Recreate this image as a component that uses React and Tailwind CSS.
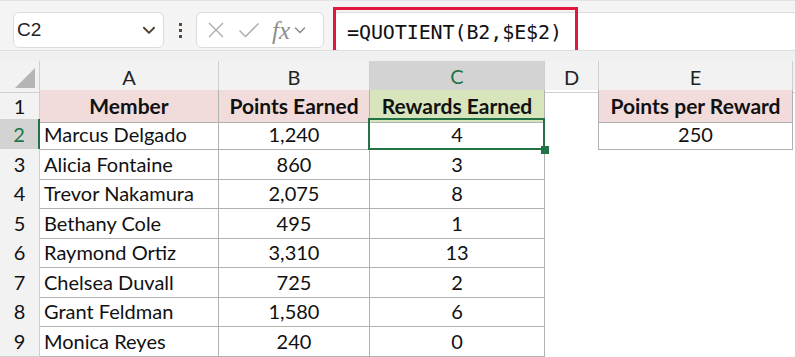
import React from 'react';

const members = [
    ['Marcus Delgado', '1,240', '4'],
    ['Alicia Fontaine', '860', '3'],
    ['Trevor Nakamura', '2,075', '8'],
    ['Bethany Cole', '495', '1'],
    ['Raymond Ortiz', '3,310', '13'],
    ['Chelsea Duvall', '725', '2'],
    ['Grant Feldman', '1,580', '6'],
    ['Monica Reyes', '240', '0'],
];

const cols = 'grid grid-cols-[40px_179px_151px_175px_54px_194px_1fr]';
const line = 'border-[#b1b1b1]';

const Chevron = ({ className }) => (
    <svg viewBox="0 0 16 16" className={className} fill="none" stroke="currentColor" strokeWidth="1.6" strokeLinecap="round" strokeLinejoin="round">
        <path d="M3.5 6l4.5 4.5L12.5 6" />
    </svg>
);

const Toolbar = () => (
    <div className="relative h-[61px] bg-[#f4f4f4] border-t border-[#e2e2e2] flex items-start pt-[11px]">
        {/* Name box */}
        <div className="ml-[13px] w-[151px] h-[36px] bg-white border border-[#dcdcdc] rounded-[6px] flex items-center justify-between pl-[3px] pr-[5px]">
            <span className="text-[19px] text-[#222]" style={{ fontFamily: '"Liberation Sans", Arial, sans-serif' }}>C2</span>
            <Chevron className="w-[18px] h-[18px] text-[#4b3a2a]" />
        </div>

        {/* Separator dots */}
        <div className="w-[32px] h-[36px] flex flex-col items-center justify-center gap-[3px]">
            <span className="w-[3px] h-[3px] bg-[#5a4a3c]"></span>
            <span className="w-[3px] h-[3px] bg-[#5a4a3c]"></span>
            <span className="w-[3px] h-[3px] bg-[#5a4a3c]"></span>
        </div>

        {/* Cancel / enter / fx */}
        <div className="w-[128px] h-[36px] bg-white border border-[#dcdcdc] rounded-[6px] flex items-center pl-[9px]">
            <svg viewBox="0 0 20 20" className="w-[20px] h-[20px] text-[#a8a8a8]" fill="none" stroke="currentColor" strokeWidth="1.3">
                <path d="M3 3l14 14M17 3L3 17" />
            </svg>
            <svg viewBox="0 0 22 20" className="ml-[12px] w-[22px] h-[20px] text-[#a8a8a8]" fill="none" stroke="currentColor" strokeWidth="1.3">
                <path d="M1.5 10.5l6 6L20.5 3.5" />
            </svg>
            <span className="ml-[12px] text-[25px] italic text-[#8e8e8e] leading-none" style={{ fontFamily: '"Liberation Serif", serif' }}>fx</span>
            <Chevron className="ml-[2px] w-[16px] h-[16px] text-[#8e8e8e]" />
        </div>

        {/* Formula input */}
        <div className="ml-[9px] flex-1 h-[39px] bg-white border border-[#dcdcdc] border-r-0 rounded-l-[6px] flex items-center pl-[13px]">
            <span className="text-[20px] text-[#111] tracking-[-0.1px]" style={{ fontFamily: '"DejaVu Sans Mono", "Liberation Mono", monospace' }}>
                =QUOTIENT(B2,$E$2)
            </span>
        </div>

        {/* Highlight annotation */}
        <div className="absolute left-[333px] top-[6px] w-[245px] h-[47px] border-[3px] border-[#e0173f]"></div>

        <div className="absolute left-0 right-0 bottom-0 h-[11px] bg-[#eef0f2] border-t border-[#dedede]"></div>
    </div>
);

const ColumnHeaders = () => {
    const letters = ['A', 'B', 'C', 'D', 'E'];
    return (
        <div className={`${cols} h-[29px] bg-[#f2f2f2] text-[20px] text-[#222]`}>
            <div className="relative border-r border-b border-[#cfcfcf]">
                <div className="absolute right-[4px] bottom-[4px] w-0 h-0 border-l-[20px] border-l-transparent border-b-[20px] border-b-[#b5b5b5]"></div>
            </div>
            {letters.map((l) =>
                l === 'C' ? (
                    <div key={l} className="flex items-center justify-center bg-[#d3d3d3] border-r border-[#cfcfcf] border-b-2 border-b-[#217346] text-[#217346]">
                        {l}
                    </div>
                ) : (
                    <div key={l} className="flex items-center justify-center border-r border-b border-[#cfcfcf]">
                        {l}
                    </div>
                )
            )}
            <div className="border-b border-[#cfcfcf]"></div>
        </div>
    );
};

const RowHeader = ({ n, active }) =>
    active ? (
        <div className="flex items-center justify-center bg-[#d3d3d3] border-r-2 border-r-[#217346] border-b border-b-[#cfcfcf] text-[#217346]">
            {n}
        </div>
    ) : (
        <div className="flex items-center justify-center bg-[#f2f2f2] border-r border-b border-[#cfcfcf]">{n}</div>
    );

const App = () => {
    return (
        <div className="w-[795px] h-[357px] overflow-hidden bg-white" style={{ fontFamily: 'Lato, "Open Sans", sans-serif' }}>
            <Toolbar />
            <ColumnHeaders />

            {/* Row 1 - headers */}
            <div className={`${cols} h-[29px] text-[20px] text-[#111]`}>
                <RowHeader n={1} />
                <div className={`flex items-center justify-center font-bold text-[21px] bg-[#f2dcdb] border-r border-b ${line}`}>Member</div>
                <div className={`flex items-center justify-center font-bold text-[21px] bg-[#f2dcdb] border-r border-b ${line}`}>Points Earned</div>
                <div className={`flex items-center justify-center font-bold text-[21px] bg-[#d8e4bc] border-r border-b ${line}`}>Rewards Earned</div>
                <div className={`border-r ${line}`}></div>
                <div className={`flex items-center justify-center font-bold text-[21px] bg-[#f2dcdb] border-r border-b ${line}`}>Points per Reward</div>
                <div></div>
            </div>

            {members.map(([name, pts, rew], i) => (
                <div key={name} className={`${cols} ${i % 2 === 0 ? 'h-[30px]' : 'h-[29px]'} text-[20px] text-[#111]`}>
                    <RowHeader n={i + 2} active={i === 0} />
                    <div className={`flex items-center pl-[4px] border-r border-b ${line}`}>{name}</div>
                    <div className={`flex items-center justify-center border-r border-b ${line}`}>{pts}</div>
                    <div className={`relative flex items-center justify-center border-r border-b ${line}`}>
                        {rew}
                        {i === 0 && (
                            <>
                                <div className="absolute -left-[2px] -top-[1px] -right-[1px] -bottom-[1px] border-2 border-[#217346]"></div>
                                <div className="absolute z-10 -right-[5px] -bottom-[5px] w-[8px] h-[8px] bg-[#217346]"></div>
                            </>
                        )}
                    </div>
                    <div className={i === 0 ? `border-r ${line}` : ''}></div>
                    {i === 0 ? (
                        <div className={`flex items-center justify-center border-r border-b ${line}`}>250</div>
                    ) : (
                        <div></div>
                    )}
                    <div></div>
                </div>
            ))}
        </div>
    );
};

export default App;
